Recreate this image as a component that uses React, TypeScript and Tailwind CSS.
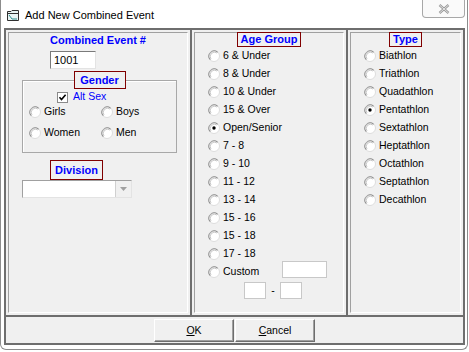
import React from "react"

// Windows-classic radio button
function Radio({ checked }: { checked?: boolean }) {
  return (
    <svg width="12" height="12" viewBox="0 0 12 12" className="shrink-0">
      <circle cx="6" cy="6" r="5.5" fill="#ffffff" stroke="#dcdcdc" />
      <path d="M2.2 9.8 A5.4 5.4 0 0 1 9.8 2.2" fill="none" stroke="#8a8a8a" />
      <path d="M3 9 A4.3 4.3 0 0 1 9 3" fill="none" stroke="#c8c8c8" />
      {checked && <circle cx="6" cy="6" r="1.7" fill="#000000" />}
    </svg>
  )
}

function Checkbox() {
  return (
    <svg width="11" height="11" viewBox="0 0 11 11" className="shrink-0">
      <rect x="0.5" y="0.5" width="10" height="10" fill="#ffffff" stroke="#8a8a8a" />
      <path d="M2.5 5.3 L4.5 7.5 L8.6 2.8" fill="none" stroke="#000000" strokeWidth="1.6" />
    </svg>
  )
}

function Option({ label, checked }: { label: string; checked?: boolean }) {
  return (
    <div className="h-[18px] flex items-center gap-[3px]">
      <Radio checked={checked} />
      <span>{label}</span>
    </div>
  )
}

function Caption({ children, className }: { children: React.ReactNode; className: string }) {
  return (
    <div
      className={`border border-[#800000] bg-[#f0f0f0] text-[#0000ff] font-bold text-[11px] flex items-center justify-center ${className}`}
    >
      {children}
    </div>
  )
}

const ageGroups = [
  "6 & Under",
  "8 & Under",
  "10 & Under",
  "15 & Over",
  "Open/Senior",
  "7 - 8",
  "9 - 10",
  "11 - 12",
  "13 - 14",
  "15 - 16",
  "15 - 18",
  "17 - 18",
]

const types = [
  "Biathlon",
  "Triathlon",
  "Quadathlon",
  "Pentathlon",
  "Sextathlon",
  "Heptathlon",
  "Octathlon",
  "Septathlon",
  "Decathlon",
]

export default function App() {
  return (
    <div className="w-[469px] h-[352px] bg-white overflow-hidden font-['Liberation_Sans',Arial,sans-serif] text-[10.5px] text-black">
      <div className="w-[468px] h-[350px] border border-t-0 border-[#8c8c8c] rounded-b-[6px] bg-white flex flex-col">
        {/* Title bar */}
        <div className="h-[28px] flex items-start shrink-0">
          <div className="flex items-center gap-[6px] pl-[6px] pt-[8px]">
            <svg width="12" height="11" viewBox="0 0 12 11">
              <path d="M0.5 1.5 H4 L5 0.5 H11.5 V10.5 H0.5 Z" fill="#e8f4f4" stroke="#303030" />
              <path d="M0.5 3.5 H11.5" stroke="#303030" />
              <path d="M2 5 L5 9 L10 9" fill="none" stroke="#2a8a8a" />
            </svg>
            <span className="text-[11px] leading-[14px]">Add New Combined Event</span>
          </div>
          <div className="ml-auto mr-[2px] w-[43px] h-[18px] border border-t-0 border-[#a8a8a8] rounded-b-[4px] bg-[#fafafa] flex items-center justify-center">
            <svg width="12" height="10" viewBox="0 0 12 10">
              <path d="M1.5 1 L10.5 9 M10.5 1 L1.5 9" stroke="#9a9a9a" strokeWidth="2.4" />
              <path d="M1.5 1 L10.5 9 M10.5 1 L1.5 9" stroke="#f4f4f4" strokeWidth="0.8" />
            </svg>
          </div>
        </div>

        {/* Client area */}
        <div className="ml-[3px] w-[461px] h-[317px] bg-[#f0f0f0] border border-[#6e6e6e] flex flex-col">
          <div className="flex h-[287px]">
            {/* Left panel */}
            <div className="w-[186px] border border-[#6e6e6e] p-[2px]">
              <div className="h-full border border-t-[#a0a0a0] border-l-[#a0a0a0] border-r-white border-b-white flex flex-col">
                <div className="h-[14px] leading-[14px] text-center text-[#0000ff] font-bold text-[11px]">
                  Combined Event #
                </div>
                <div className="ml-[41px] mt-[4px] w-[46px] h-[18px] bg-white border border-t-[#7a7a7a] border-l-[#7a7a7a] border-r-[#e3e3e3] border-b-[#e3e3e3] flex items-center pl-[3px] text-[11px]">
                  1001
                </div>
                <fieldset className="ml-[13px] mt-[2px] w-[155px] border border-[#a8a8a8] shadow-[inset_1px_1px_0_#ffffff] pb-[12px]">
                  <legend className="mx-auto">
                    <Caption className="w-[52px] h-[18px]">Gender</Caption>
                  </legend>
                  <div className="mt-[2px] pl-[34px] flex items-center gap-[5px] h-[12px]">
                    <Checkbox />
                    <span className="text-[#0000ff]">Alt Sex</span>
                  </div>
                  <div className="mt-[2px] pl-[6px] flex h-[14px] items-center">
                    <div className="w-[72px] flex items-center gap-[3px]">
                      <Radio />
                      <span>Girls</span>
                    </div>
                    <div className="flex items-center gap-[3px]">
                      <Radio />
                      <span>Boys</span>
                    </div>
                  </div>
                  <div className="mt-[7px] pl-[6px] flex h-[14px] items-center">
                    <div className="w-[72px] flex items-center gap-[3px]">
                      <Radio />
                      <span>Women</span>
                    </div>
                    <div className="flex items-center gap-[3px]">
                      <Radio />
                      <span>Men</span>
                    </div>
                  </div>
                </fieldset>
                <Caption className="ml-[41px] mt-[7px] w-[53px] h-[20px]">Division</Caption>
                <div className="ml-[13px] w-[110px] h-[18px] bg-white border border-t-[#a0a0a0] border-l-[#a0a0a0] border-r-[#e3e3e3] border-b-[#e3e3e3] flex justify-end">
                  <div className="w-[16px] h-full bg-[#f0f0f0] border-l border-[#d0d0d0] flex items-center justify-center">
                    <svg width="7" height="4" viewBox="0 0 7 4">
                      <path d="M0 0 H7 L3.5 4 Z" fill="#a0a0a0" />
                    </svg>
                  </div>
                </div>
              </div>
            </div>

            {/* Middle panel */}
            <div className="w-[156px] border border-[#6e6e6e] p-[2px]">
              <div className="h-full border border-t-[#a0a0a0] border-l-[#a0a0a0] border-r-white border-b-white flex flex-col">
                <Caption className="-mt-px mx-auto w-[64px] h-[15px]">Age Group</Caption>
                <div className="pl-[13px] flex flex-col">
                  {ageGroups.map((g) => (
                    <Option key={g} label={g} checked={g === "Open/Senior"} />
                  ))}
                  <div className="h-[18px] flex items-center gap-[3px]">
                    <Radio />
                    <span className="w-[56px]">Custom</span>
                    <div className="self-start -mt-[2px] w-[45px] h-[17px] bg-white border border-[#c8c8c8]" />
                  </div>
                  <div className="mt-px ml-[36px] flex items-center h-[17px]">
                    <div className="w-[22px] h-[17px] bg-white border border-[#c8c8c8]" />
                    <span className="w-[14px] text-center">-</span>
                    <div className="w-[22px] h-[17px] bg-white border border-[#c8c8c8]" />
                  </div>
                </div>
              </div>
            </div>

            {/* Right panel */}
            <div className="w-[117px] border border-[#6e6e6e] p-[2px]">
              <div className="h-full border border-t-[#a0a0a0] border-l-[#a0a0a0] border-r-white border-b-white flex flex-col">
                <Caption className="-mt-px mx-auto w-[33px] h-[15px]">Type</Caption>
                <div className="pl-[13px] flex flex-col">
                  {types.map((t) => (
                    <Option key={t} label={t} checked={t === "Pentathlon"} />
                  ))}
                </div>
              </div>
            </div>
          </div>

          {/* Bottom button bar */}
          <div className="h-[28px] border border-[#6e6e6e] flex justify-center gap-px pt-[2px]">
            <button className="w-[80px] h-[23px] bg-[#f0f0f0] border border-t-white border-l-white border-r-[#6e6e6e] border-b-[#6e6e6e] shadow-[inset_-1px_-1px_0_#a0a0a0] text-[10.5px]">
              <span className="underline">O</span>K
            </button>
            <button className="w-[80px] h-[23px] bg-[#f0f0f0] border border-t-white border-l-white border-r-[#6e6e6e] border-b-[#6e6e6e] shadow-[inset_-1px_-1px_0_#a0a0a0] text-[10.5px]">
              <span className="underline">C</span>ancel
            </button>
          </div>
        </div>
      </div>
    </div>
  )
}
